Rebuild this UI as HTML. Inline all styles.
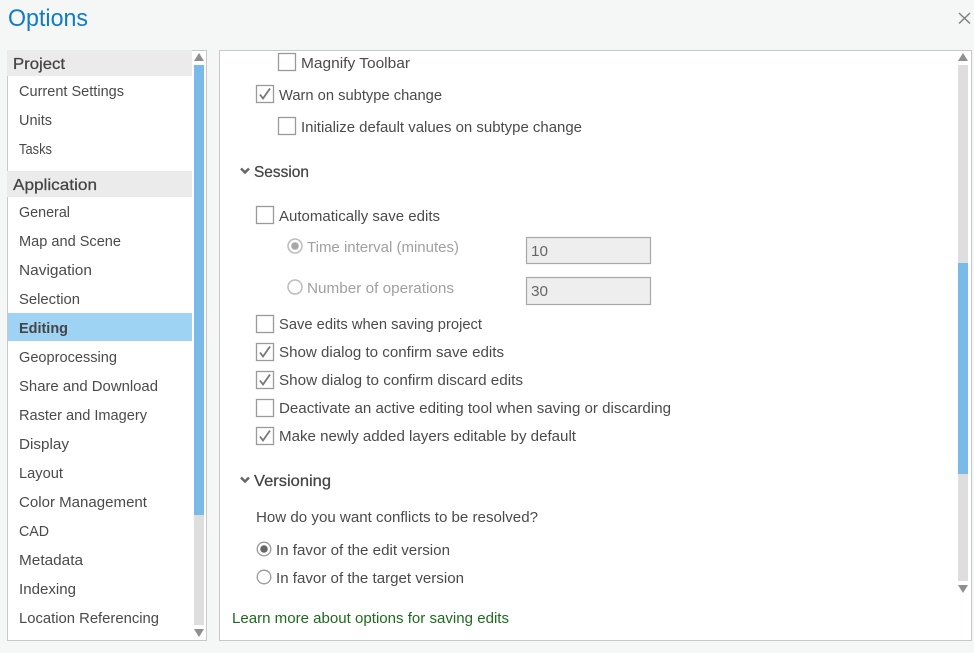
<!DOCTYPE html>
<html><head><meta charset="utf-8"><title>Options</title>
<style>
html,body{margin:0;padding:0;background:#f5f7f7;width:974px;height:653px;overflow:hidden}
svg{display:block}
text{font-family:"Liberation Sans",sans-serif;font-size:15px;fill:#4a4a4a;white-space:pre}
.n{font-size:15px;fill:#4a4a4a}
.h{font-size:16px;fill:#444;stroke:#444;stroke-width:.25}
.d{fill:#a0a0a0}
.cb{fill:#fff;stroke:#9a9a9a;stroke-width:1.3}
.ck{fill:none;stroke:#777;stroke-width:1.8}
</style></head><body>
<svg width="974" height="653" viewBox="0 0 974 653" xmlns="http://www.w3.org/2000/svg">
<rect width="974" height="653" fill="#f5f7f7"/>
<text lengthAdjust="spacingAndGlyphs" x="8" y="26" style="font-size:24px;fill:#0f7bc8" textLength="80">Options</text>
<path d="M959 13L970 23.500M970 13L959 23.500" stroke="#808080" stroke-width="1.500" fill="none"/>

<!-- left panel -->
<rect x="7.500" y="50.500" width="199" height="590" fill="#fff" stroke="#c8c8c8"/>
<rect x="7" y="50" width="185" height="26" fill="#ebebeb"/>
<rect x="7" y="171" width="185" height="26" fill="#ebebeb"/>
<rect x="8" y="313" width="184" height="28" fill="#9fd3f3"/>
<rect x="194" y="65" width="10" height="560" fill="#dedede"/>
<rect x="194" y="65" width="10" height="450" fill="#7abae8"/>
<path d="M199 53L204 61H194Z" fill="#8f8f8f"/>
<path d="M194 629H204L199 637Z" fill="#8f8f8f"/>
<text lengthAdjust="spacingAndGlyphs" class="h" x="13" y="69" textLength="52">Project</text>
<text lengthAdjust="spacingAndGlyphs" class="n" x="19" y="96" textLength="105">Current Settings</text>
<text lengthAdjust="spacingAndGlyphs" class="n" x="19" y="125" textLength="33">Units</text>
<text lengthAdjust="spacingAndGlyphs" class="n" x="19" y="154" textLength="33">Tasks</text>
<text lengthAdjust="spacingAndGlyphs" class="h" x="13" y="190" textLength="84">Application</text>
<text lengthAdjust="spacingAndGlyphs" class="n" x="19" y="217" textLength="51">General</text>
<text lengthAdjust="spacingAndGlyphs" class="n" x="19" y="246" textLength="102">Map and Scene</text>
<text lengthAdjust="spacingAndGlyphs" class="n" x="19" y="275" textLength="73">Navigation</text>
<text lengthAdjust="spacingAndGlyphs" class="n" x="19" y="304" textLength="61">Selection</text>
<text lengthAdjust="spacingAndGlyphs" class="n" x="19" y="333" textLength="49" style="font-weight:bold;fill:#444">Editing</text>
<text lengthAdjust="spacingAndGlyphs" class="n" x="19" y="362" textLength="98">Geoprocessing</text>
<text lengthAdjust="spacingAndGlyphs" class="n" x="19" y="391" textLength="139">Share and Download</text>
<text lengthAdjust="spacingAndGlyphs" class="n" x="19" y="420" textLength="128">Raster and Imagery</text>
<text lengthAdjust="spacingAndGlyphs" class="n" x="19" y="449" textLength="50">Display</text>
<text lengthAdjust="spacingAndGlyphs" class="n" x="19" y="478" textLength="44">Layout</text>
<text lengthAdjust="spacingAndGlyphs" class="n" x="19" y="507" textLength="128">Color Management</text>
<text lengthAdjust="spacingAndGlyphs" class="n" x="19" y="536" textLength="30">CAD</text>
<text lengthAdjust="spacingAndGlyphs" class="n" x="19" y="565" textLength="64">Metadata</text>
<text lengthAdjust="spacingAndGlyphs" class="n" x="19" y="594" textLength="57">Indexing</text>
<text lengthAdjust="spacingAndGlyphs" class="n" x="19" y="623" textLength="140">Location Referencing</text>

<!-- right panel -->
<rect x="219.500" y="50.500" width="752" height="590" fill="#fff" stroke="#c8c8c8"/>
<rect x="958" y="65" width="10" height="516" fill="#dedede"/>
<rect x="958" y="263" width="10" height="211" fill="#7abae8"/>
<path d="M963 53L968 61H958Z" fill="#8f8f8f"/>
<path d="M958 585H968L963 593Z" fill="#8f8f8f"/>

<rect class="cb" x="278.500" y="53.500" width="17" height="17"/>
<text lengthAdjust="spacingAndGlyphs" x="301" y="68" textLength="109">Magnify Toolbar</text>
<rect class="cb" x="256.500" y="85.500" width="17" height="17"/>
<path class="ck" d="M260 94.500L263 98.500L270 88.500"/>
<text lengthAdjust="spacingAndGlyphs" x="279" y="100" textLength="163">Warn on subtype change</text>
<rect class="cb" x="278.500" y="117.500" width="17" height="17"/>
<text lengthAdjust="spacingAndGlyphs" x="301" y="132" textLength="281">Initialize default values on subtype change</text>

<path d="M241 168.500L245 172.500L249 168.500" fill="none" stroke="#666" stroke-width="2.500"/>
<text lengthAdjust="spacingAndGlyphs" class="h" x="254" y="177" textLength="55">Session</text>

<rect class="cb" x="256.500" y="206.500" width="17" height="17"/>
<text lengthAdjust="spacingAndGlyphs" x="279" y="221" textLength="161">Automatically save edits</text>

<circle cx="295" cy="246" r="7" fill="#fff" stroke="#bcbcbc" stroke-width="1.500"/>
<circle cx="295" cy="246" r="3.800" fill="#a8a8a8"/>
<text lengthAdjust="spacingAndGlyphs" class="d" x="307" y="252" textLength="152">Time interval (minutes)</text>
<rect x="526.500" y="237.500" width="124" height="26" fill="#eee" stroke="#a8a8a8" stroke-width="1.200"/>
<text lengthAdjust="spacingAndGlyphs" x="531" y="256" textLength="17" style="fill:#666">10</text>

<circle cx="295" cy="287" r="7" fill="#fff" stroke="#bcbcbc" stroke-width="1.500"/>
<text lengthAdjust="spacingAndGlyphs" class="d" x="307" y="293" textLength="147">Number of operations</text>
<rect x="526.500" y="277.500" width="124" height="27" fill="#eee" stroke="#a8a8a8" stroke-width="1.200"/>
<text lengthAdjust="spacingAndGlyphs" x="531" y="296" textLength="17" style="fill:#666">30</text>

<rect class="cb" x="256.500" y="315.500" width="17" height="17"/>
<text lengthAdjust="spacingAndGlyphs" x="279" y="329" textLength="203">Save edits when saving project</text>
<rect class="cb" x="256.500" y="343.500" width="17" height="17"/>
<path class="ck" d="M260 352.500L263 356.500L270 346.500"/>
<text lengthAdjust="spacingAndGlyphs" x="279" y="357" textLength="225">Show dialog to confirm save edits</text>
<rect class="cb" x="256.500" y="371.500" width="17" height="17"/>
<path class="ck" d="M260 380.500L263 384.500L270 374.500"/>
<text lengthAdjust="spacingAndGlyphs" x="279" y="385" textLength="244">Show dialog to confirm discard edits</text>
<rect class="cb" x="256.500" y="399.500" width="17" height="17"/>
<text lengthAdjust="spacingAndGlyphs" x="279" y="413" textLength="392">Deactivate an active editing tool when saving or discarding</text>
<rect class="cb" x="256.500" y="427.500" width="17" height="17"/>
<path class="ck" d="M260 436.500L263 440.500L270 430.500"/>
<text lengthAdjust="spacingAndGlyphs" x="279" y="441" textLength="297">Make newly added layers editable by default</text>

<path d="M241 477.500L245 481.500L249 477.500" fill="none" stroke="#666" stroke-width="2.500"/>
<text lengthAdjust="spacingAndGlyphs" class="h" x="254" y="486" textLength="77">Versioning</text>
<text lengthAdjust="spacingAndGlyphs" x="256" y="522" textLength="282">How do you want conflicts to be resolved?</text>

<circle cx="264" cy="549" r="6.800" fill="#fff" stroke="#999" stroke-width="1.300"/>
<circle cx="264" cy="549" r="3.800" fill="#666"/>
<text lengthAdjust="spacingAndGlyphs" x="276" y="555" textLength="174">In favor of the edit version</text>
<circle cx="264" cy="577" r="6.800" fill="#fff" stroke="#999" stroke-width="1.300"/>
<text lengthAdjust="spacingAndGlyphs" x="276" y="583" textLength="188">In favor of the target version</text>

<text lengthAdjust="spacingAndGlyphs" x="232" y="623" textLength="277" style="fill:#1d6b1d">Learn more about options for saving edits</text>
</svg>
</body></html>
